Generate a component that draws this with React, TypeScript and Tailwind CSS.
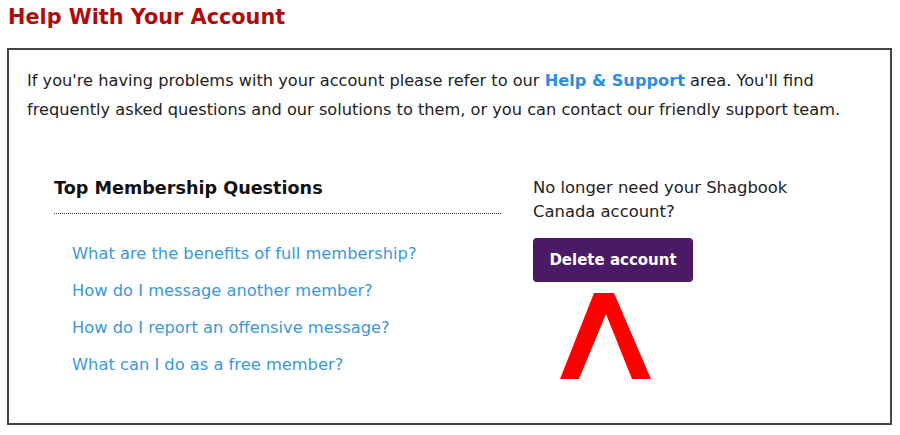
export default function App() {
  const links = [
    "What are the benefits of full membership?",
    "How do I message another member?",
    "How do I report an offensive message?",
    "What can I do as a free member?",
  ];
  return (
    <div className="w-[900px] h-[435px] bg-white relative" style={{ fontFamily: '"DejaVu Sans", Verdana, sans-serif' }}>
      <div className="px-[8px] pt-[3px]">
        <h1 className="text-[20.8px] leading-[28px] font-bold text-[#b10a0a]">Help With Your Account</h1>
      </div>
      <div className="ml-[7px] mt-[17px] w-[885px] h-[377px] border-2 border-[#444]">
        <p className="pl-[18px] pr-[20px] pt-[16px] text-[16.2px] leading-[29px] text-[#222]">
          If you're having problems with your account please refer to our{" "}
          <span className="font-bold text-[#2a8fe0]">Help &amp; Support</span> area. You'll find frequently asked
          questions and our solutions to them, or you can contact our friendly support team.
        </p>
        <div className="flex mt-[52px]">
          <div className="ml-[45px] w-[447px]">
            <h2 className="text-[17.6px] leading-[24px] font-bold text-[#111]">Top Membership Questions</h2>
            <div className="mt-[13px] border-b border-dotted border-[#333]" />
            <ul className="mt-[28px] pl-[18px] flex flex-col gap-[13px]">
              {links.map((l) => (
                <li key={l} className="text-[16.3px] leading-[24px] text-[#3b98dc]">{l}</li>
              ))}
            </ul>
          </div>
          <div className="ml-[32px]">
            <p className="text-[16.4px] leading-[24px] text-[#222] w-[300px]">
              No longer need your Shagbook
              <br />
              Canada account?
            </p>
            <button className="mt-[14px] w-[160px] h-[44px] rounded-[4px] bg-[#4a1a66] text-white font-bold text-[15px]">
              Delete account
            </button>
            <svg width="92" height="87" viewBox="0 0 92 87" className="block mt-[11px] ml-[27px]">
              <polygon points="34,0 54,0 91,86 72,86 46,21 19,86 0,86" fill="#ff0000" />
            </svg>
          </div>
        </div>
      </div>
    </div>
  );
}
